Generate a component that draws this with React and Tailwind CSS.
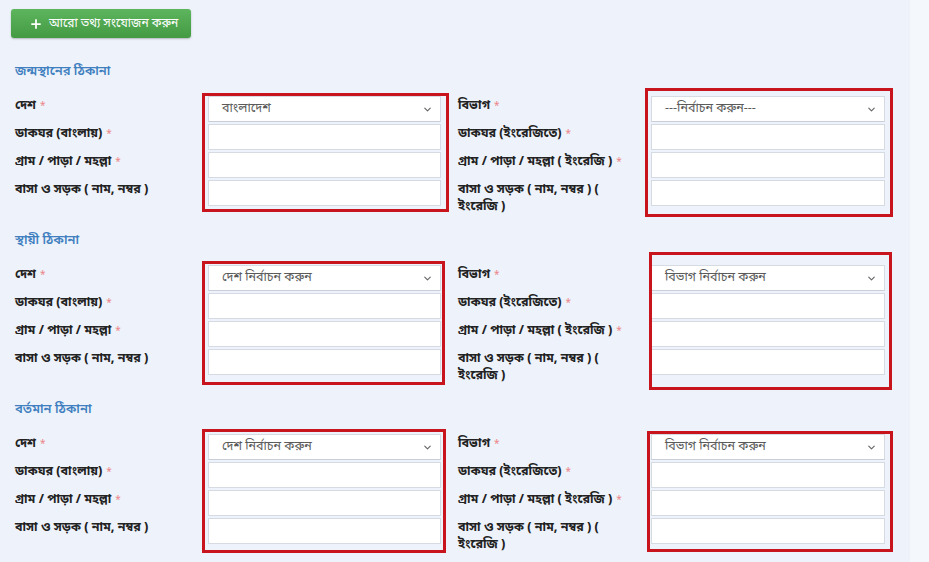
import { ChevronDown, Plus } from "lucide-react";

const sections = [
    {
        title: "জন্মস্থানের ঠিকানা",
        leftSelect: "বাংলাদেশ",
        rightSelect: "---নির্বাচন করুন---",
        leftBox: "top-[-3px] bottom-[-4px] left-[-6px] right-[-8px]",
        rightBox: "top-[-8px] bottom-[-9px] left-[-6px] right-[-8px]",
    },
    {
        title: "স্থায়ী ঠিকানা",
        leftSelect: "দেশ নির্বাচন করুন",
        rightSelect: "বিভাগ নির্বাচন করুন",
        leftBox: "top-[-4px] bottom-[-8px] left-[-6px] right-[-4px]",
        rightBox: "top-[-13px] bottom-[-13px] left-[-2px] right-[-7px]",
    },
    {
        title: "বর্তমান ঠিকানা",
        leftSelect: "দেশ নির্বাচন করুন",
        rightSelect: "বিভাগ নির্বাচন করুন",
        leftBox: "top-[-5px] bottom-[-7px] left-[-6px] right-[-5px]",
        rightBox: "top-[-3px] bottom-[-6px] left-[-4px] right-[-8px]",
    },
];

const leftLabels = [
    { text: "দেশ", req: true },
    { text: "ডাকঘর (বাংলায়)", req: true },
    { text: "গ্রাম / পাড়া / মহল্লা", req: true },
    { text: "বাসা ও সড়ক ( নাম, নম্বর )", req: false },
];

const rightLabels = [
    { text: "বিভাগ", req: true },
    { text: "ডাকঘর (ইংরেজিতে)", req: true },
    { text: "গ্রাম / পাড়া / মহল্লা ( ইংরেজি )", req: true },
    { text: "বাসা ও সড়ক ( নাম, নম্বর ) ( ইংরেজি )", req: false },
];

export default function App() {
    return (
        <div className="flex h-[562px] w-[929px] overflow-hidden bg-[#eef3fb] font-['Noto_Sans_Bengali','Noto_Sans',sans-serif] text-[#222]">
            <div className="w-[910px] shrink-0 pl-[11px] pt-[9px]">
                <button className="flex h-[29px] w-[180px] items-center gap-[6px] rounded-[3px] bg-gradient-to-b from-[#5db55d] to-[#439a43] pl-[18px] text-[12px] text-white shadow-[0_1px_2px_rgba(0,0,0,0.25)]">
                    <Plus size={14} strokeWidth={3} />
                    আরো তথ্য সংযোজন করুন
                </button>

                <div className="mt-[24px] pl-[4px]">
                    {sections.map((s) => (
                        <Section key={s.title} {...s} />
                    ))}
                </div>
            </div>
            <div className="flex-1 bg-[#f4f7fc]" />
        </div>
    );
}

function Section({ title, leftSelect, rightSelect, leftBox, rightBox }) {
    return (
        <section className="h-[169px]">
            <h3 className="h-[20px] text-[13px] font-semibold leading-[20px] text-[#3f7fbf]">
                {title}
            </h3>
            <div className="flex pt-[14px]">
                <Labels items={leftLabels} width="w-[193px]" />
                <Inputs select={leftSelect} width="w-[233px]" box={leftBox} />
                <div className="w-[17px]" />
                <Labels items={rightLabels} width="w-[193px]" />
                <Inputs select={rightSelect} width="w-[234px]" box={rightBox} />
            </div>
        </section>
    );
}

function Labels({ items, width }) {
    return (
        <div className={`flex flex-col ${width}`}>
            {items.map((l) => (
                <div
                    key={l.text}
                    className="h-[28px] w-[168px] pt-[2px] text-[12.5px] font-bold leading-[17px]"
                >
                    {l.text}
                    {l.req && (
                        <span className="ml-[4px] align-top text-[10px] font-normal text-[#ec8486]">*</span>
                    )}
                </div>
            ))}
        </div>
    );
}

function Inputs({ select, width, box }) {
    return (
        <div className={`relative flex flex-col gap-[2px] ${width}`}>
            <div className="flex h-[26px] items-center justify-between border border-[#d6dbe3] border-b-[#c9ced8] bg-white pl-[13px] pr-[7px] text-[12.5px] text-[#5a5a5a]">
                <span>{select}</span>
                <ChevronDown size={11} strokeWidth={2.5} className="text-[#666]" />
            </div>
            <div className="h-[26px] border border-[#d6dbe3] bg-white" />
            <div className="h-[26px] border border-[#d6dbe3] bg-white" />
            <div className="h-[26px] border border-[#d6dbe3] bg-white" />
            <div
                className={`pointer-events-none absolute border-[3px] border-[#c8151d] ${box}`}
            />
        </div>
    );
}
